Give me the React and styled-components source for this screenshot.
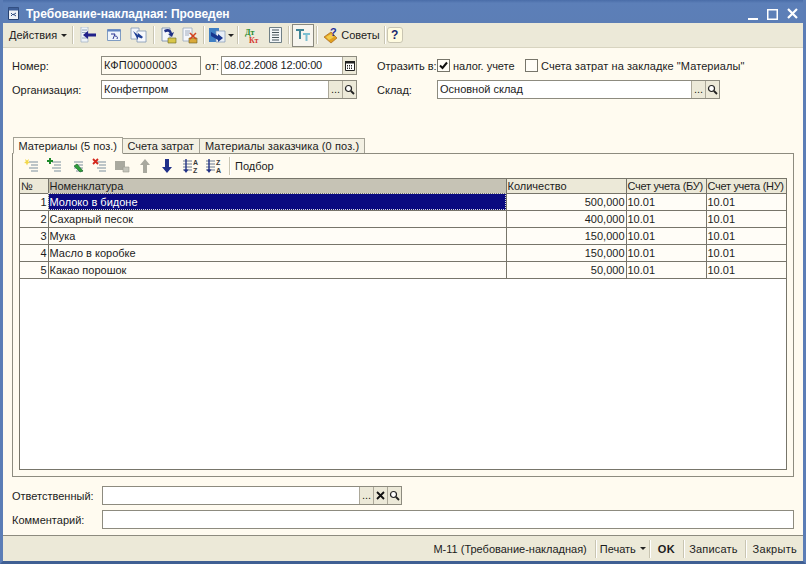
import styled, { createGlobalStyle } from "styled-components";

const GlobalStyle = createGlobalStyle`
  html, body {
    margin: 0;
    padding: 0;
    background: #ece9d8;
  }
  * {
    box-sizing: border-box;
  }
`;

const Window = styled.div`
  width: 806px;
  height: 564px;
  display: flex;
  flex-direction: column;
  overflow: hidden;
  background: #ece9d8;
  border-left: 3px solid #5b7db6;
  border-right: 3px solid #5b7db6;
  border-bottom: 3px solid #3f5f93;
  font-family: "Liberation Sans", Arial, sans-serif;
  font-size: 11px;
  color: #1c1c1c;
`;

const TitleBar = styled.div`
  height: 23px;
  flex: none;
  margin: 0 -3px;
  padding: 4px 8px 0 8px;
  display: flex;
  align-items: center;
  gap: 7px;
  background: linear-gradient(#4a6da8, #5c7fb8 14%, #5c7eb6);
  color: #fff;
  font-size: 12px;
  font-weight: bold;
`;

const TitleText = styled.span`
  flex: 1;
`;

const WinControls = styled.div`
  display: flex;
  align-items: center;
  gap: 9px;
`;

const Toolbar = styled.div`
  height: 25px;
  flex: none;
  display: flex;
  align-items: center;
  padding-left: 6px;
  background: #ece9d8;
  border-bottom: 1px solid #d8d4c0;
`;

const ToolText = styled.span`
  margin-left: ${(p) => p.$left || 0}px;
  white-space: nowrap;
`;

const Caret = styled.span`
  width: 0;
  height: 0;
  flex: none;
  margin-left: ${(p) => p.$left || 4}px;
  border-left: 3px solid transparent;
  border-right: 3px solid transparent;
  border-top: 3px solid #222;
`;

const Sep = styled.span`
  width: 1px;
  height: 18px;
  flex: none;
  margin-left: ${(p) => p.$left || 0}px;
  background: #c9c5b2;
  box-shadow: 1px 0 0 #fff;
`;

const ToolIcon = styled.span`
  display: flex;
  flex: none;
  margin-left: ${(p) => p.$left || 0}px;
`;

const PressedButton = styled.span`
  width: 22px;
  height: 23px;
  flex: none;
  margin-left: ${(p) => p.$left || 0}px;
  display: flex;
  align-items: center;
  justify-content: center;
  background: #f7f5ee;
  border: 1px solid #8a897e;
`;

const HelpButton = styled.span`
  width: 16px;
  height: 16px;
  flex: none;
  margin-left: ${(p) => p.$left || 0}px;
  display: flex;
  align-items: center;
  justify-content: center;
  background: #fffbe0;
  border: 1px solid #c9c5b2;
  border-radius: 3px;
  font-weight: bold;
  font-size: 12px;
  color: #1a2a70;
`;

const Body = styled.div`
  flex: 1;
  min-height: 0;
  display: flex;
  flex-direction: column;
  padding: 8px 9px 6px;
  background: #fffbf0;
`;

const FormRow = styled.div`
  height: 19px;
  display: flex;
  align-items: center;
  margin-bottom: 5px;
`;

const Label = styled.span`
  width: ${(p) => p.$width}px;
  margin-left: ${(p) => p.$left || 0}px;
  flex: none;
  white-space: nowrap;
  letter-spacing: ${(p) => p.$spacing || 0}px;
`;

const Field = styled.div`
  width: ${(p) => (p.$width ? `${p.$width}px` : "auto")};
  flex: ${(p) => (p.$width ? "none" : 1)};
  height: 19px;
  margin-top: ${(p) => p.$lift || 0}px;
  display: flex;
  align-items: stretch;
  border: 1px solid #8d8b7f;
  background: ${(p) => (p.$muted ? "#fffbf0" : "#fff")};
`;

const FieldValue = styled.span`
  flex: 1;
  padding-left: 2px;
  line-height: 17px;
  white-space: nowrap;
  letter-spacing: ${(p) => p.$spacing || 0}px;
`;

const FieldButton = styled.span`
  width: 14px;
  flex: none;
  display: flex;
  align-items: ${(p) => (p.$dots ? "flex-end" : "center")};
  justify-content: center;
  padding-bottom: ${(p) => (p.$dots ? 3 : 0)}px;
  background: #ece9d8;
  border-left: 1px solid #aca899;
  line-height: 1;
`;

const Check = styled.span`
  width: 13px;
  height: 13px;
  flex: none;
  display: flex;
  align-items: center;
  justify-content: center;
  background: #fffdf7;
  border: 1px solid #77756a;
`;

const Spacer = styled.div`
  height: 32px;
  flex: none;
`;

const TabStrip = styled.div`
  display: flex;
  align-items: flex-end;
  height: 17px;
  flex: none;
  padding-left: 1px;
`;

const Tab = styled.span`
  height: ${(p) => (p.$active ? 17 : 15)}px;
  padding: 0 ${(p) => (p.$active ? 4.5 : 5)}px;
  display: flex;
  align-items: center;
  white-space: nowrap;
  letter-spacing: ${(p) => p.$spacing || 0}px;
  background: ${(p) => (p.$active ? "#fffbf0" : "#f3f0e3")};
  border: 1px solid #a3a195;
  border-bottom: ${(p) => (p.$active ? "1px solid #fffbf0" : "none")};
  margin-left: ${(p) => (p.$active ? 0 : -1)}px;
  margin-bottom: ${(p) => (p.$active ? -1 : 0)}px;
  position: relative;
  z-index: ${(p) => (p.$active ? 1 : 0)};
`;

const TabPanel = styled.div`
  flex: 1;
  min-height: 0;
  display: flex;
  flex-direction: column;
  padding: 0 6px 6px;
  border: 1px solid #8d8b7f;
  background: #fffbf0;
`;

const PanelBar = styled.div`
  height: 24px;
  flex: none;
  display: flex;
  align-items: center;
  padding-left: 5px;
  gap: 6.5px;
`;

const TableFrame = styled.div`
  flex: 1;
  min-height: 0;
  background: #fff;
  border: 1px solid #77756a;
  overflow: hidden;
`;

const Table = styled.table`
  width: 767px;
  border-collapse: collapse;
  table-layout: fixed;
`;

const Head = styled.th`
  height: 14px;
  padding: 0 0 0 1px;
  text-align: left;
  font-weight: normal;
  white-space: nowrap;
  overflow: hidden;
  letter-spacing: ${(p) => (p.$tight ? -0.3 : 0)}px;
  background: ${(p) => (p.$sorted ? "#c6c3b5" : "#ece9d8")};
  border-right: 1px solid #77756a;
  border-bottom: 1px solid #77756a;
`;

const Cell = styled.td`
  height: 17px;
  padding: ${(p) => (p.$right ? "0 1px 0 0" : "0 0 0 1px")};
  text-align: ${(p) => (p.$right ? "right" : "left")};
  white-space: nowrap;
  color: ${(p) => (p.$selected ? "#fff" : "inherit")};
  background: ${(p) => (p.$selected ? "#0a0a80" : "#fffdf7")};
  outline: ${(p) => (p.$selected ? "1px dotted #ddd" : "none")};
  outline-offset: -1px;
  border-right: 1px solid #77756a;
  border-bottom: 1px solid #77756a;
`;

const BottomRow = styled.div`
  height: 19px;
  flex: none;
  display: flex;
  align-items: center;
  margin-top: ${(p) => p.$top}px;
`;

const Footer = styled.div`
  height: 26px;
  flex: none;
  display: flex;
  align-items: center;
  justify-content: flex-end;
  padding-right: 6px;
  background: #ece9d8;
  border-top: 1px solid #8d8b7f;
`;

const FooterItem = styled.span`
  margin-left: ${(p) => p.$left || 0}px;
  white-space: nowrap;
  font-weight: ${(p) => (p.$bold ? "bold" : "normal")};
  letter-spacing: ${(p) => p.$spacing || 0}px;
`;

const rows = [
  ["Молоко в бидоне", "500,000"],
  ["Сахарный песок", "400,000"],
  ["Мука", "150,000"],
  ["Масло в коробке", "150,000"],
  ["Какао порошок", "50,000"],
];

const Lines = () => (
  <g stroke="#7d8f9e" strokeWidth="1.2">
    <path d="M5 4h9M7 7h7M5 10h9M7 13h7" />
  </g>
);

const AddIcon = () => (
  <svg width="16" height="16" viewBox="0 0 16 16">
    <Lines />
    <path d="M1 1l2 1.5 2-1.5-.8 2.5L6 5l-2 .3L3 7.5 2 5.3 0 5l1.8-1.5z" fill="#f2d84a" />
  </svg>
);

const AddChildIcon = () => (
  <svg width="16" height="16" viewBox="0 0 16 16">
    <Lines />
    <path d="M3 0v6M0 3h6" stroke="#1d8a2a" strokeWidth="2" />
  </svg>
);

const EditIcon = () => (
  <svg width="16" height="16" viewBox="0 0 16 16">
    <Lines />
    <path d="M5 8l6 6 3-1-6-7z" fill="#2f9e3a" stroke="#17602a" strokeWidth=".6" />
  </svg>
);

const DeleteIcon = () => (
  <svg width="16" height="16" viewBox="0 0 16 16">
    <Lines />
    <path d="M1 1l5 5M6 1L1 6" stroke="#d4261c" strokeWidth="1.8" />
  </svg>
);

const CopyGrayIcon = () => (
  <svg width="16" height="16" viewBox="0 0 16 16">
    <path d="M1 3h10v9H1z" fill="#a9a99f" />
    <path d="M9 9h6v5H9z" fill="#c4c4ba" stroke="#9b9b91" strokeWidth=".6" />
  </svg>
);

const ArrowUpIcon = ({ color }) => (
  <svg width="16" height="16" viewBox="0 0 16 16">
    <path d="M8 1l5 6h-3v8H6V7H3z" fill={color} />
  </svg>
);

const ArrowDownIcon = ({ color }) => (
  <svg width="16" height="16" viewBox="0 0 16 16">
    <path d="M8 15l5-6h-3V1H6v8H3z" fill={color} />
  </svg>
);

const SortIcon = ({ first, second }) => (
  <svg width="17" height="16" viewBox="0 0 17 16">
    <path d="M1 3h9M1 6h9M1 9h9M1 12h9" stroke="#6c7d92" strokeWidth="1.1" />
    <path d="M4 1v11" stroke="#1f2f85" strokeWidth="1.4" />
    <path d="M1.500 11.500L4 15l2.500-3.500z" fill="#1f2f85" />
    <text x="11" y="7" fontSize="7" fontWeight="bold" fontFamily="Liberation Sans" fill="#3a3a3a">{first}</text>
    <text x="11" y="15" fontSize="7" fontWeight="bold" fontFamily="Liberation Sans" fill="#3a3a3a">{second}</text>
  </svg>
);

const BackDocIcon = () => (
  <svg width="17" height="16" viewBox="0 0 17 16">
    <path d="M1 0h7v15H1z" fill="#eef3f8" stroke="#9db0c4" strokeWidth=".7" />
    <path d="M2 3h5M2 5.500h5M2 11h5" stroke="#7f95ad" strokeWidth=".8" />
    <path d="M3 8l5-4v2.500h8v3H8V12z" fill="#20208a" />
  </svg>
);

const FlowIcon = () => (
  <svg width="14" height="14" viewBox="0 0 14 14">
    <path d="M.500 1.500h13v11H.500z" fill="#eef4fb" stroke="#7f9cc2" />
    <path d="M.500 1.500h13v2H.500z" fill="#5f83c1" />
    <path d="M4 6h4l-2 5M8 8c2 0 3 1 2 3" fill="none" stroke="#27308f" />
  </svg>
);

const DocsArrowIcon = () => (
  <svg width="17" height="16" viewBox="0 0 17 16">
    <path d="M1 1h8v11H1z" fill="#f2f5fa" stroke="#7f95b5" strokeWidth=".8" />
    <path d="M7 4h9v11H7z" fill="#f7f8fb" stroke="#7f95b5" strokeWidth=".8" />
    <path d="M3 4l5 4 0-2 5 4-1.500 1.500L8 10v3z" fill="#1f3f95" />
  </svg>
);

const PostIcon = () => (
  <svg width="17" height="17" viewBox="0 0 17 17">
    <path d="M2 1h8v13H2z" fill="#f5f7fb" stroke="#6e86a8" strokeWidth=".8" />
    <path d="M4 3c4-2 7-1 8 3l2-1-2 5-4-3 2-.5c-1-2-3-2-5-1z" fill="#1d2f85" />
    <path d="M8 11h8v5H8z" fill="#d8c64a" stroke="#6a6420" strokeWidth=".6" />
  </svg>
);

const UnpostIcon = () => (
  <svg width="17" height="17" viewBox="0 0 17 17">
    <path d="M2 1h9v13H2z" fill="#f5f7fb" stroke="#9aa8bb" strokeWidth=".8" />
    <path d="M4 4h5M4 6h5M4 8h4" stroke="#8a9ab0" strokeWidth=".8" />
    <path d="M8 11h8v5H8z" fill="#d9a93a" stroke="#6a5a20" strokeWidth=".6" />
    <path d="M9 6l6 6M15 6l-6 6" stroke="#d4421c" strokeWidth="1.500" />
  </svg>
);

const ExchangeIcon = () => (
  <svg width="17" height="17" viewBox="0 0 17 17">
    <path d="M0 1h10v14H0z" fill="#3f7fc4" />
    <path d="M7 4h9v11H7z" fill="#e8eef6" stroke="#7f95b5" strokeWidth=".7" />
    <path d="M2 5l7 4v-2l5 4-5 4v-2L2 9z" fill="#17358f" />
  </svg>
);

const DtKtIcon = () => (
  <svg width="17" height="17" viewBox="0 0 17 17">
    <text x="2" y="8" fontSize="8" fontWeight="bold" fontFamily="Liberation Serif" fill="#1f8a2c">Дт</text>
    <text x="6" y="16" fontSize="8" fontWeight="bold" fontFamily="Liberation Serif" fill="#d63a30">Кт</text>
  </svg>
);

const ListDocIcon = () => (
  <svg width="15" height="16" viewBox="0 0 15 16">
    <path d="M1.500 .500h12v15h-12z" fill="#f3f6f8" stroke="#6f7f86" />
    <path d="M4 3h7M4 5.500h7M4 8h7M4 10.500h7M4 13h7" stroke="#46555c" strokeWidth="1" />
  </svg>
);

const TreeIcon = () => (
  <svg width="16" height="14" viewBox="0 0 16 14">
    <path d="M1 1h8v2H6v8H4V3H1z" fill="#3f8596" />
    <path d="M8 5h7v2h-2.500v6h-2V7H8z" fill="#7cc0d2" />
  </svg>
);

const TipsIcon = () => (
  <svg width="16" height="17" viewBox="0 0 16 17">
    <path d="M1 10l7-5 6 6-6 5z" fill="#e0a020" stroke="#a8661a" strokeWidth=".7" />
    <path d="M3 10l5-3 3 3-5 3z" fill="#f3cc4e" />
    <text x="7" y="9" fontSize="11" fontWeight="bold" fontFamily="Liberation Sans" fill="#24309a">?</text>
  </svg>
);

const SearchIcon = () => (
  <svg width="11" height="11" viewBox="0 0 11 11">
    <circle cx="4.500" cy="4.500" r="3" fill="#fff" stroke="#222" strokeWidth="1.200" />
    <path d="M7 7l3 3" stroke="#222" strokeWidth="1.800" />
  </svg>
);

const CalendarIcon = () => (
  <svg width="10" height="10" viewBox="0 0 10 10">
    <path d="M.500 .500h9v9h-9z" fill="#fff" stroke="#222" />
    <path d="M0 0h10v2.500H0z" fill="#222" />
    <path d="M2 4.500h6M2 6h6M2 7.500h6" stroke="#222" strokeDasharray="1 1" />
  </svg>
);

const ClearIcon = () => (
  <svg width="9" height="9" viewBox="0 0 9 9">
    <path d="M1 1l7 7M8 1L1 8" stroke="#111" strokeWidth="1.800" />
  </svg>
);

const CheckMark = () => (
  <svg width="11" height="11" viewBox="0 0 11 11">
    <path d="M2 5.500l2.500 2.500L9 2.500" fill="none" stroke="#111" strokeWidth="2" />
  </svg>
);

const TitleDocIcon = () => (
  <svg width="11" height="13" viewBox="0 0 11 13">
    <path d="M.500 .500h10v12H.500z" fill="#eef1f6" stroke="#26406e" />
    <path d="M.500 .500h10v3H.500z" fill="#3e5f99" />
    <path d="M3 6l2 2 3-2M3 9l2-2 3 2" fill="none" stroke="#2d4a80" />
  </svg>
);

const WinGlyphs = () => (
  <WinControls>
    <svg width="10" height="14" viewBox="0 0 10 14">
      <path d="M0 11h10v2H0z" fill="#fff" />
    </svg>
    <svg width="11" height="12" viewBox="0 0 11 12">
      <path d="M.750 1.750h9.500v9.500H.750z" fill="none" stroke="#fff" strokeWidth="1.500" />
    </svg>
    <svg width="11" height="11" viewBox="0 0 11 11">
      <path d="M1 1l9 9M10 1l-9 9" stroke="#fff" strokeWidth="2.200" />
    </svg>
  </WinControls>
);

const App = () => {
  return (
    <Window>
      <GlobalStyle />
      <TitleBar>
        <TitleDocIcon />
        <TitleText>Требование-накладная: Проведен</TitleText>
        <WinGlyphs />
      </TitleBar>

      <Toolbar>
        <ToolText>Действия</ToolText>
        <Caret />
        <Sep $left={5} />
        <ToolIcon $left={7}><BackDocIcon /></ToolIcon>
        <ToolIcon $left={10}><FlowIcon /></ToolIcon>
        <ToolIcon $left={9}><DocsArrowIcon /></ToolIcon>
        <Sep $left={6} />
        <ToolIcon $left={6}><PostIcon /></ToolIcon>
        <ToolIcon $left={4}><UnpostIcon /></ToolIcon>
        <Sep $left={5} />
        <ToolIcon $left={5}><ExchangeIcon /></ToolIcon>
        <Caret $left={2} />
        <Sep $left={3} />
        <ToolIcon $left={5}><DtKtIcon /></ToolIcon>
        <ToolIcon $left={8}><ListDocIcon /></ToolIcon>
        <Sep $left={5} />
        <PressedButton $left={3}><TreeIcon /></PressedButton>
        <Sep $left={2} />
        <ToolIcon $left={6}><TipsIcon /></ToolIcon>
        <ToolText $left={2}>Советы</ToolText>
        <Sep $left={4} />
        <HelpButton $left={2}>?</HelpButton>
      </Toolbar>

      <Body>
        <FormRow>
          <Label $width={89}>Номер:</Label>
          <Field $width={100} $muted>
            <FieldValue $spacing={0.2}>КФП00000003</FieldValue>
          </Field>
          <Label $width={16} $left={4}>от:</Label>
          <Field $width={136}>
            <FieldValue $spacing={-0.15}>08.02.2008 12:00:00</FieldValue>
            <FieldButton><CalendarIcon /></FieldButton>
          </Field>
          <Label $width={60} $left={20}>Отразить в:</Label>
          <Check><CheckMark /></Check>
          <Label $width={72} $left={3}>налог. учете</Label>
          <Check />
          <Label $width={205} $left={3} $spacing={0.08}>Счета затрат на закладке "Материалы"</Label>
        </FormRow>
        <FormRow>
          <Label $width={89}>Организация:</Label>
          <Field $width={256}>
            <FieldValue>Конфетпром</FieldValue>
            <FieldButton $dots>...</FieldButton>
            <FieldButton><SearchIcon /></FieldButton>
          </Field>
          <Label $width={60} $left={20}>Склад:</Label>
          <Field $width={283} $lift={-1}>
            <FieldValue>Основной склад</FieldValue>
            <FieldButton $dots>...</FieldButton>
            <FieldButton><SearchIcon /></FieldButton>
          </Field>
        </FormRow>

        <Spacer />

        <TabStrip>
          <Tab $active>Материалы (5 поз.)</Tab>
          <Tab>Счета затрат</Tab>
          <Tab $spacing={0.1}>Материалы заказчика (0 поз.)</Tab>
        </TabStrip>
        <TabPanel>
          <PanelBar>
            <AddIcon />
            <AddChildIcon />
            <EditIcon />
            <DeleteIcon />
            <CopyGrayIcon />
            <ArrowUpIcon color="#a9a99f" />
            <ArrowDownIcon color="#20308a" />
            <SortIcon first="A" second="Z" />
            <SortIcon first="Z" second="A" />
            <Sep />
            <ToolText $left={-1}>Подбор</ToolText>
          </PanelBar>
          <TableFrame>
            <Table>
              <colgroup>
                <col width="28" />
                <col width="458" />
                <col width="120" />
                <col width="80" />
                <col width="81" />
              </colgroup>
              <thead>
                <tr>
                  <Head>№</Head>
                  <Head $sorted>Номенклатура</Head>
                  <Head>Количество</Head>
                  <Head $tight>Счет учета (БУ)</Head>
                  <Head $tight>Счет учета (НУ)</Head>
                </tr>
              </thead>
              <tbody>
                {rows.map(([name, qty], i) => (
                  <tr key={name}>
                    <Cell $right>{i + 1}</Cell>
                    <Cell $selected={i === 0}>{name}</Cell>
                    <Cell $right>{qty}</Cell>
                    <Cell>10.01</Cell>
                    <Cell>10.01</Cell>
                  </tr>
                ))}
              </tbody>
            </Table>
          </TableFrame>
        </TabPanel>

        <BottomRow $top={9}>
          <Label $width={90}>Ответственный:</Label>
          <Field $width={300}>
            <FieldValue />
            <FieldButton $dots>...</FieldButton>
            <FieldButton><ClearIcon /></FieldButton>
            <FieldButton><SearchIcon /></FieldButton>
          </Field>
        </BottomRow>
        <BottomRow $top={5}>
          <Label $width={90}>Комментарий:</Label>
          <Field />
        </BottomRow>
      </Body>

      <Footer>
        <FooterItem>М-11 (Требование-накладная)</FooterItem>
        <Sep $left={8} />
        <FooterItem $left={4}>Печать</FooterItem>
        <Caret />
        <Sep $left={3} />
        <FooterItem $left={8} $bold $spacing={0.5}>OK</FooterItem>
        <Sep $left={8} />
        <FooterItem $left={5} $spacing={0.15}>Записать</FooterItem>
        <Sep $left={7} />
        <FooterItem $left={7} $spacing={0.3}>Закрыть</FooterItem>
      </Footer>
    </Window>
  );
};

export default App;
